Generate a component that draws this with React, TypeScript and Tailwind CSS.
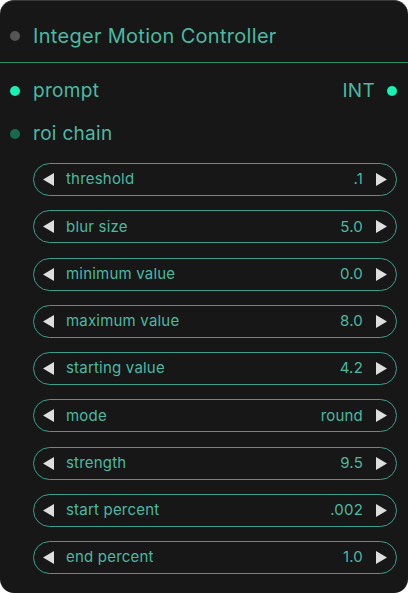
import React from 'react';

interface Widget {
  label: string;
  value: string;
}

const widgets: Widget[] = [
  { label: 'threshold', value: '.1' },
  { label: 'blur size', value: '5.0' },
  { label: 'minimum value', value: '0.0' },
  { label: 'maximum value', value: '8.0' },
  { label: 'starting value', value: '4.2' },
  { label: 'mode', value: 'round' },
  { label: 'strength', value: '9.5' },
  { label: 'start percent', value: '.002' },
  { label: 'end percent', value: '1.0' },
];

const Arrow: React.FC<{ dir: 'left' | 'right' }> = ({ dir }) => (
  <svg width="11" height="13" viewBox="0 0 11 13" className="shrink-0 block">
    {dir === 'left' ? (
      <polygon points="11,0 11,13 0,6.5" fill="#dedede" />
    ) : (
      <polygon points="0,0 0,13 11,6.5" fill="#dedede" />
    )}
  </svg>
);

const App: React.FC = () => {
  return (
    <div className="w-[408px] h-[593px] bg-white" style={{ fontFamily: 'Inter, "Noto Sans", sans-serif' }}>
      <div className="w-full h-full bg-[#171717] rounded-[14px] border-t border-[#3a3a3a] flex flex-col text-[#4cb9a2]">
        {/* header */}
        <div className="h-[61px] flex items-center pt-[9px] pl-[10px] gap-[13px]">
          <span className="w-[10px] h-[10px] rounded-full bg-[#555555]" />
          <span className="text-[20px] tracking-[0.3px]">Integer Motion Controller</span>
        </div>
        <div className="h-px bg-[#2f9066]" />

        {/* slots */}
        <div className="flex items-center h-[56px] pl-[10px] pr-[11px]">
          <span className="w-[10px] h-[10px] rounded-full bg-[#17f1b1]" />
          <span className="ml-[13px] text-[19px] tracking-[0.3px]">prompt</span>
          <span className="ml-auto text-[19px] tracking-[0.3px]">INT</span>
          <span className="ml-[12px] w-[10px] h-[10px] rounded-full bg-[#17f1b1]" />
        </div>
        <div className="flex items-center h-[30px] pl-[10px]">
          <span className="w-[10px] h-[10px] rounded-full bg-[#176a4e]" />
          <span className="ml-[13px] text-[19px] tracking-[0.3px]">roi chain</span>
        </div>

        {/* widgets */}
        <div className="flex flex-col gap-[14.25px] pl-[33px] pr-[11px] pt-[14px]">
          {widgets.map((w) => (
            <div
              key={w.label}
              className="h-[33px] rounded-full border-[1.5px] border-[#3a9f8c] flex items-center pl-[9px] pr-[9px] text-[15px]"
            >
              <Arrow dir="left" />
              <span className="ml-[12px] tracking-[0.2px]">{w.label}</span>
              <span className="ml-auto tracking-[0.2px]">{w.value}</span>
              <span className="ml-[13px]">
                <Arrow dir="right" />
              </span>
            </div>
          ))}
        </div>
      </div>
    </div>
  );
};

export default App;
